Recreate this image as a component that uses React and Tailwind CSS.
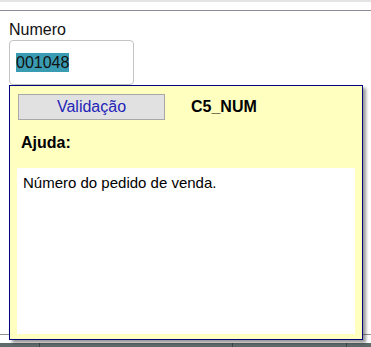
export default function App() {
    return (
        <div className="relative flex h-[347px] w-[371px] flex-col overflow-hidden bg-white font-['Liberation_Sans',Arial,sans-serif]">
            <div className="h-[2px] bg-[#e4e4e4]" />
            <div className="h-[8px]" />
            <div className="h-px bg-[#8f8d9a]" />

            {/* Field */}
            <div className="pl-[9px] pt-[10px]">
                <div className="text-[16px] leading-[18px] text-[#111]">Numero</div>
                <div className="mt-[1px] flex h-[45px] w-[125px] items-center rounded-[4px] border border-[#c4c4c4] pl-[6px]">
                    <span className="bg-[#3a9cb3] text-[16px] leading-[19px] text-[#111]">001048</span>
                </div>
            </div>

            <div className="flex-1" />
            <div className="h-px bg-[#8f8f8f]" />
            <div className="h-[8px]" />
            <div className="flex h-[4px] bg-[#5f6b6b]">
                <div className="w-[39px]" />
                <div className="w-px bg-[#3e4848]" />
                <div className="w-[192px]" />
                <div className="w-px bg-[#3e4848]" />
                <div className="w-[113px]" />
                <div className="w-px bg-[#3e4848]" />
            </div>

            {/* Help tooltip */}
            <div className="absolute left-[9px] top-[85px] flex h-[255px] w-[354px] flex-col border border-[#000080] bg-[#ffffc0] shadow-[3px_3px_3px_rgba(0,0,0,0.4)]">
                <div className="flex items-center pl-[8px] pt-[8px]">
                    <div className="flex h-[26px] w-[147px] items-center justify-center border border-[#a8a8a8] bg-[#e1e1e1] text-[16px] text-[#2424b8]">
                        Validação
                    </div>
                    <span className="ml-[26px] text-[16px] font-bold text-black">C5_NUM</span>
                </div>
                <div className="mt-[14px] pl-[11px] text-[16px] font-bold leading-[18px] text-black">Ajuda:</div>
                <div className="mx-[7px] mb-[5px] mt-[16px] flex-1 bg-white pl-[6px] pt-[6px] text-[15px] leading-[17px] text-black">
                    Número do pedido de venda.
                </div>
            </div>
        </div>
    );
}
